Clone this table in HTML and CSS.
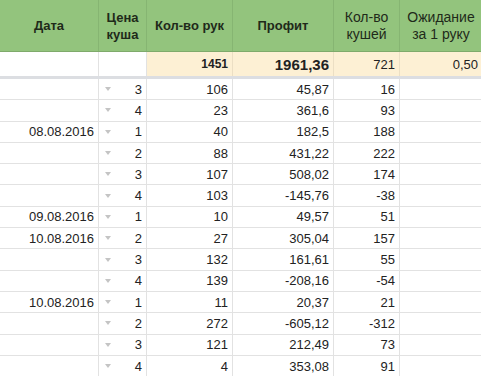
FILE: index.html
```html
<!DOCTYPE html>
<html>
<head>
<meta charset="utf-8">
<link rel="stylesheet" href="styles.css">
</head>
<body>
<div class="sheet">
  <div class="row head">
    <div class="c c1 b">Дата</div>
    <div class="c c2 b">Цена<br>куша</div>
    <div class="c c3 b">Кол-во рук</div>
    <div class="c c4 b">Профит</div>
    <div class="c c5 lg">Кол-во<br>кушей</div>
    <div class="c c6 lg">Ожидание<br>за 1 руку</div>
  </div>
  <div class="row sum">
    <div class="c c1"></div>
    <div class="c c2"></div>
    <div class="c c3 pe num b sm">1451</div>
    <div class="c c4 pe num b big">1961,36</div>
    <div class="c c5 pe num">721</div>
    <div class="c c6 pe num">0,50</div>
  </div>
  <div class="band"></div>
  <div class="body">
    <div class="row"><div class="c c1 num"></div><div class="c c2 num"><span class="dd"></span>3</div><div class="c c3 num">106</div><div class="c c4 num">45,87</div><div class="c c5 num">16</div><div class="c c6"></div></div>
    <div class="row"><div class="c c1 num"></div><div class="c c2 num"><span class="dd"></span>4</div><div class="c c3 num">23</div><div class="c c4 num">361,6</div><div class="c c5 num">93</div><div class="c c6"></div></div>
    <div class="row"><div class="c c1 num">08.08.2016</div><div class="c c2 num"><span class="dd"></span>1</div><div class="c c3 num">40</div><div class="c c4 num">182,5</div><div class="c c5 num">188</div><div class="c c6"></div></div>
    <div class="row"><div class="c c1 num"></div><div class="c c2 num"><span class="dd"></span>2</div><div class="c c3 num">88</div><div class="c c4 num">431,22</div><div class="c c5 num">222</div><div class="c c6"></div></div>
    <div class="row"><div class="c c1 num"></div><div class="c c2 num"><span class="dd"></span>3</div><div class="c c3 num">107</div><div class="c c4 num">508,02</div><div class="c c5 num">174</div><div class="c c6"></div></div>
    <div class="row"><div class="c c1 num"></div><div class="c c2 num"><span class="dd"></span>4</div><div class="c c3 num">103</div><div class="c c4 num">-145,76</div><div class="c c5 num">-38</div><div class="c c6"></div></div>
    <div class="row"><div class="c c1 num">09.08.2016</div><div class="c c2 num"><span class="dd"></span>1</div><div class="c c3 num">10</div><div class="c c4 num">49,57</div><div class="c c5 num">51</div><div class="c c6"></div></div>
    <div class="row"><div class="c c1 num">10.08.2016</div><div class="c c2 num"><span class="dd"></span>2</div><div class="c c3 num">27</div><div class="c c4 num">305,04</div><div class="c c5 num">157</div><div class="c c6"></div></div>
    <div class="row"><div class="c c1 num"></div><div class="c c2 num"><span class="dd"></span>3</div><div class="c c3 num">132</div><div class="c c4 num">161,61</div><div class="c c5 num">55</div><div class="c c6"></div></div>
    <div class="row"><div class="c c1 num"></div><div class="c c2 num"><span class="dd"></span>4</div><div class="c c3 num">139</div><div class="c c4 num">-208,16</div><div class="c c5 num">-54</div><div class="c c6"></div></div>
    <div class="row"><div class="c c1 num">10.08.2016</div><div class="c c2 num"><span class="dd"></span>1</div><div class="c c3 num">11</div><div class="c c4 num">20,37</div><div class="c c5 num">21</div><div class="c c6"></div></div>
    <div class="row"><div class="c c1 num"></div><div class="c c2 num"><span class="dd"></span>2</div><div class="c c3 num">272</div><div class="c c4 num">-605,12</div><div class="c c5 num">-312</div><div class="c c6"></div></div>
    <div class="row"><div class="c c1 num"></div><div class="c c2 num"><span class="dd"></span>3</div><div class="c c3 num">121</div><div class="c c4 num">212,49</div><div class="c c5 num">73</div><div class="c c6"></div></div>
    <div class="row"><div class="c c1 num"></div><div class="c c2 num"><span class="dd"></span>4</div><div class="c c3 num">4</div><div class="c c4 num">353,08</div><div class="c c5 num">91</div><div class="c c6"></div></div>
  </div>
</div>
</body>
</html>
```

FILE: styles.css
```css
html, body {
  margin: 0;
  padding: 0;
  background: #ffffff;
}
body {
  width: 481px;
  height: 376px;
  overflow: hidden;
  font-family: "Liberation Sans", Arial, sans-serif;
  font-size: 13px;
  color: #222222;
}
.sheet {
  display: flex;
  flex-direction: column;
  width: 483px;
}
.row {
  display: grid;
  grid-template-columns: 99px 48px 86px 101px 66px 83px;
}
.c {
  box-sizing: border-box;
  border-right: 1px solid #e2e2e2;
  display: flex;
  align-items: center;
  white-space: nowrap;
}
.num {
  justify-content: flex-end;
  padding-right: 4px;
}
.b { font-weight: bold; }

.head {
  height: 52px;
  background: #93c47d;
  border-bottom: 1px solid #7faa6b;
  box-sizing: border-box;
}
.head .c {
  border-right-color: #86b572;
  justify-content: center;
  text-align: center;
  line-height: 17px;
  color: #1f2a1a;
}
.head .lg {
  font-size: 14px;
}

.sum {
  height: 24px;
}
.sum .c {
  border-right-color: #e2e2e2;
}
.sum .pe {
  background: #fdf0d4;
  border-right-color: #ecdfc4;
}
.sum .sm { font-size: 12px; }
.sum .big { font-size: 15px; padding-right: 4px; }

.band {
  height: 3px;
  background: #dcdee2;
}

.body .row {
  height: 21.3px;
  box-sizing: border-box;
  border-bottom: 1px solid #e2e2e2;
}
.c2 {
  position: relative;
}
.dd {
  position: absolute;
  left: 6px;
  top: 50%;
  margin-top: -2px;
  width: 0;
  height: 0;
  border-left: 3.5px solid transparent;
  border-right: 3.5px solid transparent;
  border-top: 4px solid #c4c4c4;
}
```
